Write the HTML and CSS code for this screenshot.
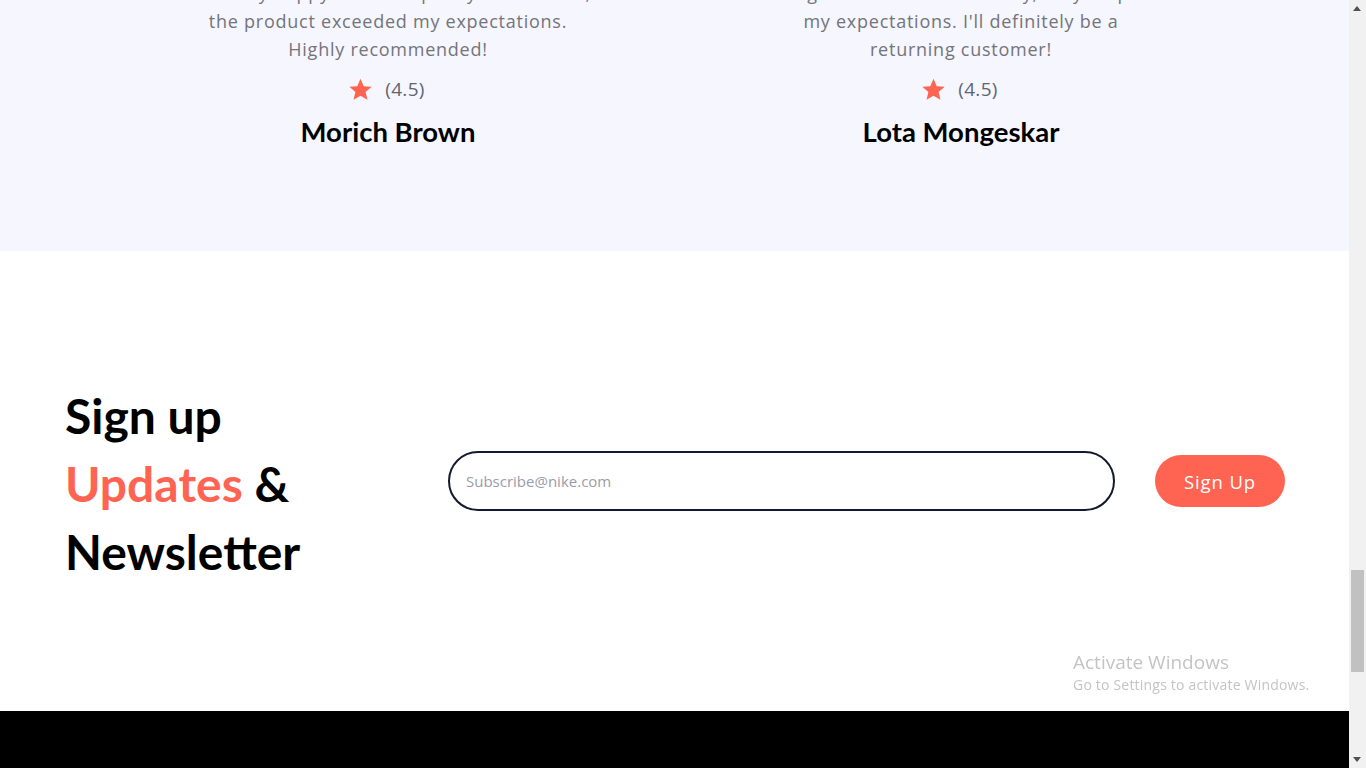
FILE: index.html
```html
<!DOCTYPE html>
<html lang="en">
<head>
<meta charset="utf-8">
<title>Sign up</title>
<link rel="stylesheet" href="styles.css">
</head>
<body>
<div class="page">
  <section class="testimonials">
    <div class="reviews">
      <div class="review">
        <p class="quote">I'm really happy with the quality and service,<br>the product exceeded my expectations.<br>Highly recommended!</p>
        <div class="rating">
          <svg class="star" viewBox="0 0 24 24" width="24" height="24"><path d="M12 1.6l3.1 7.2 7.6.6-5.8 5 1.8 7.5L12 17.9l-6.7 4 1.8-7.5-5.8-5 7.6-.6z"/></svg>
          <span class="score">(4.5)</span>
        </div>
        <h3 class="name">Morich Brown</h3>
      </div>
      <div class="review">
        <p class="quote">Amazing shoes and fast delivery, they surpassed<br>my expectations. I'll definitely be a<br>returning customer!</p>
        <div class="rating">
          <svg class="star" viewBox="0 0 24 24" width="24" height="24"><path d="M12 1.6l3.1 7.2 7.6.6-5.8 5 1.8 7.5L12 17.9l-6.7 4 1.8-7.5-5.8-5 7.6-.6z"/></svg>
          <span class="score">(4.5)</span>
        </div>
        <h3 class="name">Lota Mongeskar</h3>
      </div>
    </div>
  </section>

  <section class="signup">
    <h2 class="signup-title">Sign up<br><span class="accent">Updates</span> &amp;<br>Newsletter</h2>
    <form class="signup-form">
      <input class="email" type="email" placeholder="Subscribe@nike.com">
      <button class="btn" type="button">Sign Up</button>
    </form>
  </section>

  <footer class="footer"></footer>
</div>

<div class="watermark">
  <div class="wm-title">Activate Windows</div>
  <div class="wm-sub">Go to Settings to activate Windows.</div>
</div>

<div class="scrollbar">
  <span class="arrow up"></span>
  <span class="thumb"></span>
  <span class="arrow down"></span>
</div>
</body>
</html>
```

FILE: styles.css
```css
* { box-sizing: border-box; }
html, body { margin: 0; padding: 0; height: 100%; overflow: hidden; }
body { background: #fff; font-family: "Open Sans", "DejaVu Sans", sans-serif; }

.page {
  width: calc(100% - 17px);
  height: 100%;
  overflow: hidden;
  display: flex;
  flex-direction: column;
}

.testimonials {
  background: #f5f6fe;
  margin-top: -21px;
  padding-bottom: 102px;
  flex: none;
}
.reviews {
  width: 1146px;
  margin: 0 auto;
  display: grid;
  grid-template-columns: 1fr 1fr;
}
.review { text-align: center; min-width: 0; }
.quote {
  margin: 0;
  font-family: "Open Sans", sans-serif;
  font-size: 18px;
  letter-spacing: 0.75px;
  line-height: 28px;
  color: #74747a;
  white-space: nowrap;
}
.rating {
  margin-top: 14px;
  height: 24px;
  display: flex;
  justify-content: center;
  align-items: center;
  gap: 12px;
}
.star { fill: #ff6452; width: 25px; height: 25px; margin-left: -3px; }
.score { font-size: 19px; letter-spacing: 0.3px; color: #616472; }
.name {
  margin: 14px 0 0;
  font-family: "Lato", sans-serif;
  font-weight: 700;
  font-size: 27.5px;
  line-height: 34px;
  color: #000;
}

.signup {
  flex: none;
  height: 460px;
  padding: 0 64px 0 65px;
  display: flex;
  align-items: center;
}
.signup-title {
  margin: 6px 0 0;
  width: 383px;
  flex: none;
  font-family: "Lato", sans-serif;
  font-weight: 700;
  font-size: 48px;
  line-height: 68px;
  color: #000;
}
.accent { color: #ff6452; }
.signup-form {
  flex: 1;
  display: flex;
  align-items: center;
  gap: 40px;
}
.email {
  flex: 1;
  height: 60px;
  border: 2px solid #141a2e;
  border-radius: 30px;
  padding: 0 16px;
  font-family: "Open Sans", sans-serif;
  font-size: 15px;
  color: #333;
  background: #fff;
  outline: none;
}
.email::placeholder { color: #9a9cab; }
.btn {
  width: 130px;
  height: 52px;
  border: none;
  border-radius: 26px;
  background: #ff6452;
  color: #fff;
  font-family: "Open Sans", sans-serif;
  font-size: 18.5px;
  letter-spacing: 0.9px;
}

.footer { flex: 1; background: #000; }

.watermark {
  position: fixed;
  left: 1073px;
  top: 650px;
  color: #c4c4c4;
  font-family: "Open Sans", sans-serif;
}
.wm-title { font-size: 19px; line-height: 24px; }
.wm-sub { font-size: 14px; letter-spacing: 0.2px; line-height: 22px; }

.scrollbar {
  position: fixed;
  top: 0;
  right: 0;
  width: 17px;
  height: 100%;
  background: #f1f1f1;
}
.thumb {
  position: absolute;
  left: 2px;
  top: 570px;
  width: 13px;
  height: 102px;
  background: #c1c1c1;
}
.arrow {
  position: absolute;
  left: 4px;
  width: 0;
  height: 0;
  border-left: 4.5px solid transparent;
  border-right: 4.5px solid transparent;
}
.arrow.up { top: 6px; border-bottom: 5px solid #505050; }
.arrow.down { bottom: 6px; border-top: 5px solid #505050; }
```
